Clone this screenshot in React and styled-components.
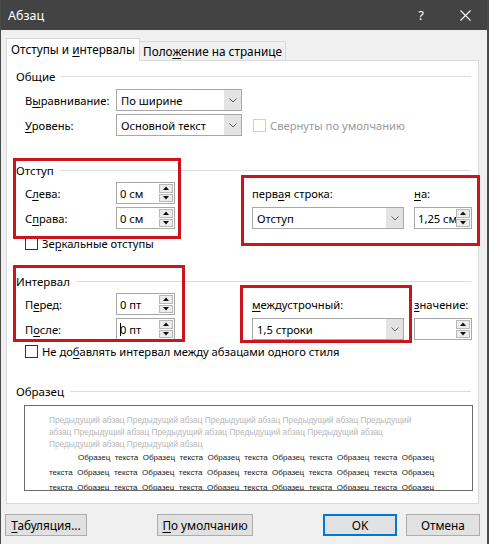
import React from "react";
import styled, { createGlobalStyle } from "styled-components";

const Global = createGlobalStyle`
  html, body { margin: 0; padding: 0; background: #f0f0f0; }
  body { font-family: "Segoe UI", "Noto Sans", sans-serif; font-size: 11.2px; color: #000; }
  * { box-sizing: border-box; }
  u { text-decoration: underline; text-underline-offset: 2px; }
`;

const Window = styled.div`
  width: 489px;
  height: 544px;
  background: #f0f0f0;
  border-left: 1px solid #4a4a4a;
  border-right: 2px solid #4a4a4a;
  overflow: hidden;
  display: flex;
  flex-direction: column;
`;

const TitleBar = styled.div`
  height: 30px;
  background: #434343;
  color: #fff;
  display: flex;
  align-items: center;
  padding-left: 7px;
  font-size: 12.5px;
`;

const TitleText = styled.div`
  flex: 1;
`;

const HelpGlyph = styled.span`
  font-size: 13px;
  margin-right: 36px;
`;

const CloseGlyph = styled.svg`
  width: 11px;
  height: 11px;
  margin-right: 16px;
`;

const TabStrip = styled.div`
  display: flex;
  align-items: flex-end;
  margin-top: 8px;
  padding-left: 5px;
  position: relative;
  z-index: 1;
`;

const Tab = styled.div`
  height: ${(p) => (p.$active ? "23px" : "19px")};
  width: ${(p) => p.$w}px;
  background: ${(p) => (p.$active ? "#fff" : "#f0f0f0")};
  border: 1px solid #d9d9d9;
  border-bottom: none;
  border-left: ${(p) => (p.$active ? "1px solid #d9d9d9" : "none")};
  margin-bottom: ${(p) => (p.$active ? "-1px" : "0")};
  display: flex;
  align-items: center;
  justify-content: center;
  font-size: 11.8px;
  padding-bottom: ${(p) => (p.$active ? "2px" : "0")};
  white-space: nowrap;
`;

const Panel = styled.div`
  position: relative;
  margin-left: 5px;
  width: 473px;
  height: 444px;
  background: #fff;
  border: 1px solid #d9d9d9;
  padding: 0 7px 0 9px;
`;

const Legend = styled.div`
  display: flex;
  align-items: center;
  height: 14px;
  font-size: 11.5px;
  margin-top: ${(p) => p.$mt}px;
  &::after {
    content: "";
    flex: 1;
    height: 1px;
    background: #dcdcdc;
    margin-left: 6px;
  }
`;

const GeneralRow = styled.div`
  display: grid;
  grid-template-columns: 91px 126px auto;
  align-items: center;
  height: 22px;
  padding-left: 9px;
  margin-top: ${(p) => p.$mt}px;
`;

const SplitGrid = styled.div`
  display: grid;
  grid-template-columns: 91px 59px 77px 152px 10px 58px;
  grid-template-rows: 22px 22px;
  row-gap: 3px;
  align-items: center;
  padding-left: 9px;
  margin-top: 5px;
`;

const Label = styled.div`
  grid-column: ${(p) => p.$col || "auto"};
  white-space: nowrap;
`;

const Combo = styled.div`
  grid-column: ${(p) => p.$col || "auto"};
  height: 22px;
  border: 1px solid #a8a8a8;
  display: flex;
  background: #fff;
`;

const ComboText = styled.div`
  flex: 1;
  display: flex;
  align-items: center;
  padding-left: 4px;
`;

const ComboButton = styled.div`
  width: 17px;
  background: #e3e3e3;
  display: flex;
  align-items: center;
  justify-content: center;
`;

const Spin = styled.div`
  grid-column: ${(p) => p.$col || "auto"};
  height: 22px;
  border: 1px solid #a8a8a8;
  display: flex;
  background: #fff;
`;

const SpinText = styled.div`
  flex: 1;
  display: flex;
  align-items: center;
  padding-left: 3px;
  white-space: nowrap;
  overflow: hidden;
`;

const Caret = styled.span`
  display: inline-block;
  width: 1px;
  height: 13px;
  background: #000;
  margin-right: -1px;
`;

const SpinButtons = styled.div`
  width: 15px;
  display: flex;
  flex-direction: column;
  padding: 1px 1px 1px 0;
  gap: 1px;
`;

const SpinHalf = styled.div`
  flex: 1;
  background: #ececec;
  border: 1px solid #b8b8b8;
  display: flex;
  align-items: center;
  justify-content: center;
`;

const CheckRow = styled.div`
  display: flex;
  align-items: center;
  height: 14px;
  padding-left: 9px;
  margin-top: ${(p) => p.$mt || 0}px;
  margin-left: ${(p) => p.$ml || 0}px;
  gap: 4px;
  color: ${(p) => (p.$disabled ? "#9a9a9a" : "#000")};
  white-space: nowrap;
`;

const Box = styled.div`
  flex: none;
  width: 13px;
  height: 13px;
  border: 1px solid ${(p) => (p.$disabled ? "#cfcfcf" : "#333")};
  background: #fff;
`;

const Preview = styled.div`
  margin-top: 7px;
  margin-left: 8px;
  width: 449px;
  height: 86px;
  border: 1px solid #6b6b6b;
  overflow: hidden;
  padding: 8px 38px 0 24px;
  font-family: "Liberation Sans", Arial, sans-serif;
`;

const PrevPara = styled.div`
  font-size: 8.3px;
  line-height: 12px;
  color: #b7b7b7;
`;

const SamplePara = styled.div`
  font-size: 8px;
  line-height: 15px;
  color: #1a1a1a;
  text-align: justify;
  text-indent: 29px;
  margin-top: 0;
`;

const Annotation = styled.div`
  position: absolute;
  left: ${(p) => p.$x}px;
  top: ${(p) => p.$y}px;
  width: ${(p) => p.$w}px;
  height: ${(p) => p.$h}px;
  border: 3px solid #cc141c;
  pointer-events: none;
`;

const ButtonBar = styled.div`
  display: flex;
  margin-top: 10px;
  padding-left: 4px;
`;

const Button = styled.div`
  height: 22px;
  width: ${(p) => p.$w}px;
  margin-left: ${(p) => p.$ml || 0}px;
  background: #e1e1e1;
  border: 1px solid ${(p) => (p.$default ? "#0078d7" : "#adadad")};
  box-shadow: ${(p) => (p.$default ? "inset 0 0 0 1px #0078d7" : "none")};
  display: flex;
  align-items: center;
  justify-content: center;
  font-size: 11.8px;
`;

const Chevron = () => (
  <svg width="8" height="5" viewBox="0 0 8 5">
    <path d="M0.5 0.5 L4 4 L7.5 0.5" fill="none" stroke="#606060" strokeWidth="1" />
  </svg>
);

const Up = () => (
  <svg width="6" height="4" viewBox="0 0 6 4">
    <path d="M0 4 L3 0.5 L6 4 Z" fill="#111" />
  </svg>
);

const Down = () => (
  <svg width="6" height="4" viewBox="0 0 6 4">
    <path d="M0 0 L3 3.5 L6 0 Z" fill="#111" />
  </svg>
);

const ComboBox = ({ value, col }) => (
  <Combo $col={col}>
    <ComboText>{value}</ComboText>
    <ComboButton>
      <Chevron />
    </ComboButton>
  </Combo>
);

const SpinBox = ({ value, col, caret }) => (
  <Spin $col={col}>
    <SpinText>
      {caret && <Caret />}
      {value}
    </SpinText>
    <SpinButtons>
      <SpinHalf>
        <Up />
      </SpinHalf>
      <SpinHalf>
        <Down />
      </SpinHalf>
    </SpinButtons>
  </Spin>
);

const prev = Array(11).fill("Предыдущий абзац").join(" ");
const sample = Array(18).fill("Образец текста").join(" ");

export default function App() {
  return (
    <>
      <Global />
      <Window>
        <TitleBar>
          <TitleText>Абзац</TitleText>
          <HelpGlyph>?</HelpGlyph>
          <CloseGlyph viewBox="0 0 11 11">
            <path d="M0.5 0.5 L10.5 10.5 M10.5 0.5 L0.5 10.5" stroke="#fff" strokeWidth="1.1" />
          </CloseGlyph>
        </TitleBar>

        <TabStrip>
          <Tab $active $w={134}>
            <span>
              Отступы и <u>и</u>нтервалы
            </span>
          </Tab>
          <Tab $w={146}>
            <span>
              Поло<u>ж</u>ение на странице
            </span>
          </Tab>
        </TabStrip>

        <Panel>
          <Legend $mt={8}>Общие</Legend>
          <GeneralRow $mt={6}>
            <Label>
              В<u>ы</u>равнивание:
            </Label>
            <ComboBox value="По ширине" />
          </GeneralRow>
          <GeneralRow $mt={3}>
            <Label>
              <u>У</u>ровень:
            </Label>
            <ComboBox value="Основной текст" />
            <CheckRow $disabled $ml={2}>
              <Box $disabled />
              <span>Свернуты по умолчанию</span>
            </CheckRow>
          </GeneralRow>

          <Legend $mt={27}>Отступ</Legend>
          <SplitGrid>
            <Label $col={1}>
              С<u>л</u>ева:
            </Label>
            <SpinBox col={2} value="0 см" />
            <Label $col={4}>
              перв<u>а</u>я строка:
            </Label>
            <Label $col={6}>
              <u>н</u>а:
            </Label>
            <Label $col={1}>
              С<u>п</u>рава:
            </Label>
            <SpinBox col={2} value="0 см" />
            <ComboBox col={4} value="Отступ" />
            <SpinBox col={6} value="1,25 см" />
          </SplitGrid>
          <CheckRow $mt={7}>
            <Box />
            <span>
              Зе<u>р</u>кальные отступы
            </span>
          </CheckRow>

          <Legend $mt={24}>Интервал</Legend>
          <SplitGrid>
            <Label $col={1}>
              П<u>е</u>ред:
            </Label>
            <SpinBox col={2} value="0 пт" />
            <Label $col={4}>
              <u>м</u>еждустрочный:
            </Label>
            <Label $col={6}>
              <u>з</u>начение:
            </Label>
            <Label $col={1}>
              П<u>о</u>сле:
            </Label>
            <SpinBox col={2} value="0 пт" caret />
            <ComboBox col={4} value="1,5 строки" />
            <SpinBox col={6} value="" />
          </SplitGrid>
          <CheckRow $mt={4}>
            <Box />
            <span>
              Не до<u>б</u>авлять интервал между абзацами одного стиля
            </span>
          </CheckRow>

          <Legend $mt={26}>Образец</Legend>
          <Preview>
            <PrevPara>{prev}</PrevPara>
            <SamplePara>{sample}</SamplePara>
          </Preview>

          <Annotation $x={6} $y={97} $w={168} $h={81} />
          <Annotation $x={234} $y={114} $w={239} $h={71} />
          <Annotation $x={6} $y={204} $w={172} $h={77} />
          <Annotation $x={233} $y={224} $w={172} $h={58} />
        </Panel>

        <ButtonBar>
          <Button $w={82}>
            <span>
              <u>Т</u>абуляция...
            </span>
          </Button>
          <Button $w={96} $ml={70}>
            <span>
              <u>П</u>о умолчанию
            </span>
          </Button>
          <Button $w={74} $ml={70} $default>
            OK
          </Button>
          <Button $w={74} $ml={9}>
            Отмена
          </Button>
        </ButtonBar>
      </Window>
    </>
  );
}
